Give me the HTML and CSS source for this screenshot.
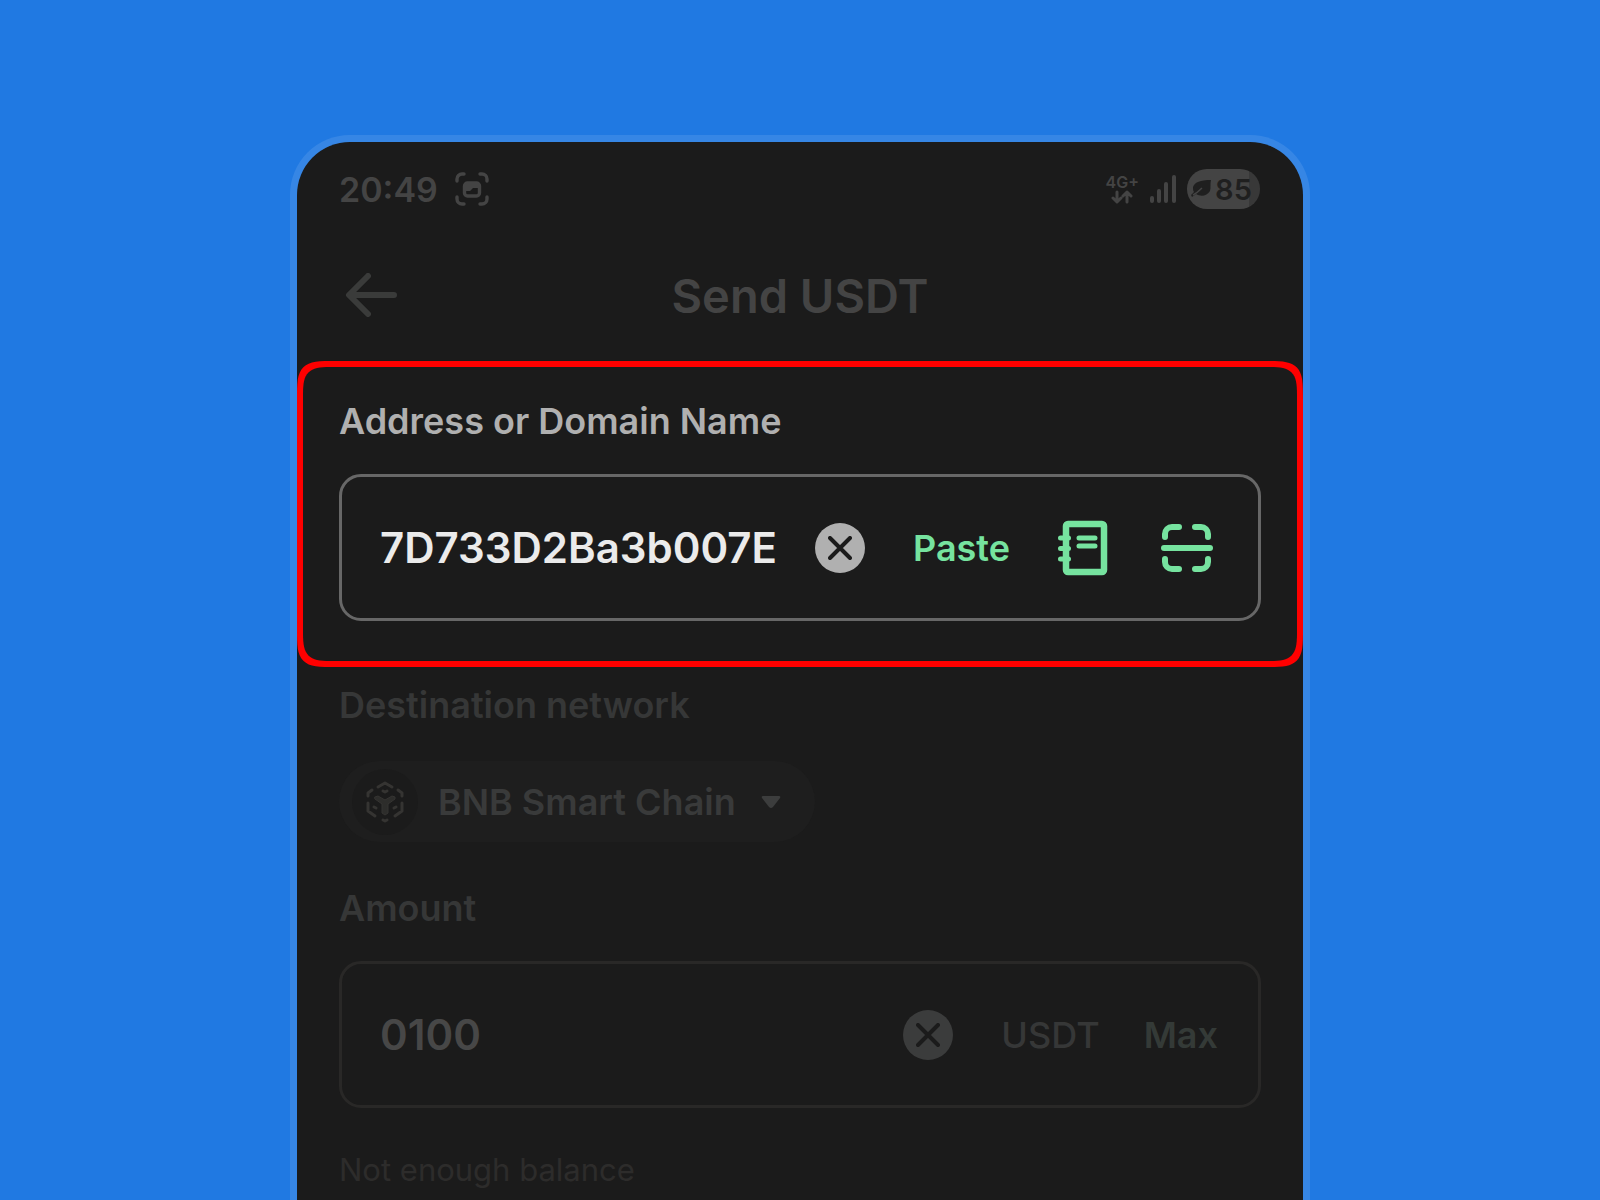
FILE: index.html
```html
<!DOCTYPE html>
<html lang="en">
<head>
  <meta charset="UTF-8">
  <meta name="viewport" content="width=device-width, initial-scale=1.0">
  <title>Send USDT</title>
  <link rel="stylesheet" href="styles.css">
</head>
<body>
<main class="phone">

  <!-- Phone status bar -->
  <div class="status-bar">
    <span class="time">20:49</span>
    <svg class="shot-icon" width="34" height="34" viewBox="0 0 34 34" fill="none" stroke="currentColor" stroke-width="3.4" stroke-linecap="round">
      <path d="M2 9V7a5 5 0 0 1 5-5h2M25 2h2a5 5 0 0 1 5 5v2M32 25v2a5 5 0 0 1-5 5h-2M9 32H7a5 5 0 0 1-5-5v-2"/>
      <rect x="9.500" y="11" width="15" height="13" rx="3"/>
      <path d="M11 12h12v4h-5l-3 3h-4z" fill="currentColor" stroke="none"/>
    </svg>
    <div class="status-right">
      <div class="network">
        <span>4G+</span>
        <svg width="24" height="14" viewBox="0 0 24 14" fill="none" stroke="currentColor" stroke-width="3" stroke-linecap="round" stroke-linejoin="round">
          <path d="M7 2v10M3 8l4 4 4-4M17 12V2M13 6l4-4 4 4"/>
        </svg>
      </div>
      <svg class="signal" width="26" height="28" viewBox="0 0 26 28" fill="currentColor">
        <rect x="0" y="21" width="4" height="7" rx="2"/>
        <rect x="7" y="14" width="4" height="14" rx="2"/>
        <rect x="14" y="7" width="4" height="21" rx="2"/>
        <rect x="22" y="0" width="4" height="28" rx="2"/>
      </svg>
      <div class="battery">
        <svg width="20" height="18" viewBox="0 0 20 18">
          <path d="M20 0C9 0 4 2 2 7c0 2 0 4 1 5L0 15l1 2 4-3c5 3 11 2 14-3 1-3 0-7 1-11z" fill="#1f1f1f"/>
          <path d="M2 15C6 13 9 10 11 8" fill="none" stroke="#444" stroke-width="1.500"/>
        </svg>
        <span>85</span>
      </div>
    </div>
  </div>

  <header class="header">
    <button class="back" type="button" aria-label="Back">
      <svg width="52" height="44" viewBox="0 0 52 44" fill="none" stroke="currentColor" stroke-width="6" stroke-linecap="round" stroke-linejoin="round">
        <path d="M23 3L4 22l19 19M5 22h44"/>
      </svg>
    </button>
    <h1>Send USDT</h1>
  </header>

  <!-- Highlighted step -->
  <section class="address-section">
    <label for="address">Address or Domain Name</label>
    <div class="field">
      <input id="address" class="address-input" type="text" value="7D733D2Ba3b007E" spellcheck="false">
      <button class="clear" type="button" aria-label="Clear address">
        <svg width="24" height="24" viewBox="0 0 24 24" fill="none" stroke="currentColor" stroke-width="4" stroke-linecap="round">
          <path d="M2 2l20 20M22 2L2 22"/>
        </svg>
      </button>
      <button class="paste" type="button">Paste</button>
      <button class="book" type="button" aria-label="Address book">
        <svg width="50" height="56" viewBox="0 0 50 56" fill="none" stroke="currentColor" stroke-linecap="round" stroke-linejoin="round">
          <rect x="8" y="4" width="38" height="48" rx="2" stroke-width="6.500"/>
          <path d="M2.500 18h8M2.500 28.500h8M2.500 39h8" stroke-width="5"/>
          <path d="M21 18h16M21 26h16" stroke-width="5"/>
        </svg>
      </button>
      <button class="scan" type="button" aria-label="Scan QR code">
        <svg width="54" height="50" viewBox="0 0 54 50" fill="none" stroke="currentColor" stroke-linecap="round">
          <path d="M5 14v-3a7 7 0 0 1 7-7h7M35 4h6a7 7 0 0 1 7 7v3M48 36v3a7 7 0 0 1-7 7h-6M19 46h-7a7 7 0 0 1-7-7v-3" stroke-width="6"/>
          <path d="M4 25h46" stroke-width="6"/>
        </svg>
      </button>
    </div>
  </section>

  <section class="details">
    <label for="network">Destination network</label>
    <div class="network-pill">
      <span class="chain-icon">
        <svg width="38" height="42" viewBox="0 0 38 42" fill="none" stroke="currentColor" stroke-width="3" stroke-linecap="round" stroke-linejoin="round">
          <path d="M12 6l7-4 7 4M2 15v-3l4-3M32 9l4 3v3M2 22v8l7 5M36 22v8l-7 5M17 39l2 1 2-1"/>
          <path d="M17 10l2 1 2-1M8 26l2 1M30 26l-2 1"/>
          <path d="M9 16l3-1 7 4 7-4 3 1v2l-7 5v9l-3 2-3-2v-9l-7-5z" fill="currentColor" fill-opacity="0.700" stroke-width="1"/>
        </svg>
      </span>
      <select id="network">
        <option>BNB Smart Chain</option>
      </select>
      <svg class="caret" width="20" height="14" viewBox="0 0 20 14" fill="currentColor">
        <path d="M2 1h16q2 0 1 2l-7 9q-2 2-4 0L1 3Q0 1 2 1z"/>
      </svg>
    </div>

    <label for="amount">Amount</label>
    <div class="field amount-field">
      <input id="amount" type="text" inputmode="decimal" value="0100">
      <button class="clear" type="button" aria-label="Clear amount">
        <svg width="24" height="24" viewBox="0 0 24 24" fill="none" stroke="currentColor" stroke-width="4" stroke-linecap="round">
          <path d="M2 2l20 20M22 2L2 22"/>
        </svg>
      </button>
      <span class="unit">USDT</span>
      <button class="max" type="button">Max</button>
    </div>
    <p class="helper">Not enough balance</p>
  </section>

</main>
</body>
</html>
```
FILE: styles.css
```css
* {
  box-sizing: border-box;
}

body {
  margin: 0;
  height: 100vh;
  overflow: hidden;
  padding-top: 135px;
  background-color: #2079e2;
  font-family: Inter, "Liberation Sans", sans-serif;
}

button, input, select {
  margin: 0;
  padding: 0;
  border: none;
  background: none;
  font-family: inherit;
}

button {
  cursor: pointer;
}

button svg {
  display: block;
}

.phone {
  max-width: 1020px;
  min-height: 100%;
  margin: 0 auto;
  border: 7px solid rgba(255, 255, 255, 0.1);
  border-bottom: none;
  border-radius: 60px 60px 0 0;
  background-color: #1b1b1b;
  background-clip: padding-box;
}

/* Status bar */
.status-bar {
  display: flex;
  align-items: center;
  height: 94px;
  padding: 0 43px 0 42px;
  color: #444;
}

.time {
  font-size: 34px;
  font-weight: 600;
}

.shot-icon {
  margin-left: 17px;
}

.status-right {
  display: flex;
  align-items: center;
  gap: 11px;
  margin-left: auto;
}

.network {
  display: flex;
  flex-direction: column;
  align-items: center;
  font-size: 16px;
  font-weight: 600;
  line-height: 16px;
}

.battery {
  display: flex;
  align-items: center;
  justify-content: center;
  gap: 4px;
  width: 73px;
  height: 40px;
  padding-right: 4px;
  border-radius: 20px;
  background: linear-gradient(to right, #444 85%, #383838 85%);
  color: #1f1f1f;
  font-size: 29px;
  font-weight: 600;
}

/* Title row, the title stays centred beside the back button */
.header {
  display: grid;
  grid-template-columns: 52px 1fr 52px;
  align-items: center;
  height: 118px;
  margin-bottom: 7px;
  padding: 0 48px;
}

.back {
  color: #3a3b3a;
}

h1 {
  margin: 0;
  color: #444;
  font-size: 47px;
  font-weight: 600;
  text-align: center;
}

label {
  display: block;
  font-size: 36px;
  font-weight: 600;
  line-height: 44px;
}

.address-section {
  padding: 32px 36px 40px;
  border: 6px solid #f00;
  border-radius: 32px;
  color: #b0b0b0;
}

@supports (corner-shape: squircle) {
  .address-section {
    border-radius: 40px;
    corner-shape: squircle;
  }
}

.field {
  display: flex;
  align-items: center;
  height: 147px;
  margin-top: 31px;
  padding: 0 44px 0 38px;
  border: 3px solid #676767;
  border-radius: 22px;
}

.field input {
  flex: 1;
  min-width: 0;
  color: #ebebeb;
  font-size: 42px;
  font-weight: 600;
}

.clear {
  display: flex;
  align-items: center;
  justify-content: center;
  flex: none;
  width: 50px;
  height: 50px;
  border-radius: 50%;
  background-color: #b0b0b0;
  color: #1b1b1b;
}

.paste, .unit, .max {
  margin-left: 48px;
  font-size: 36px;
  font-weight: 600;
}

.paste, .book, .scan {
  color: #76e39f;
}

.book {
  margin-left: 48px;
}

.scan {
  margin-left: 52px;
}

/* Dimmed part of the form */
.details {
  padding: 16px 42px 0;
  color: #363737;
}

.network-pill {
  display: flex;
  align-items: center;
  width: fit-content;
  height: 81px;
  margin: 34px 0 44px;
  padding: 0 34px 0 13px;
  border-radius: 41px;
  background-color: #1e1e1e;
}

.chain-icon {
  display: flex;
  align-items: center;
  justify-content: center;
  width: 66px;
  height: 66px;
  margin-right: 20px;
  border-radius: 50%;
  background-color: #1b1b1b;
  color: #353432;
}

.network-pill select {
  appearance: none;
  color: #393a3a;
  font-size: 36px;
  font-weight: 600;
}

.caret {
  margin-left: 25px;
  color: #3c3d3d;
}

.amount-field {
  padding-right: 40px;
  border-color: #292827;
}

.amount-field input {
  color: #474747;
}

.amount-field .clear {
  background-color: #3b3c3c;
}

.unit {
  font-weight: 500;
}

.max {
  margin-left: 44px;
  color: #343a37;
}

.helper {
  margin: 42px 0 0;
  color: #2d2c2b;
  font-size: 31px;
  line-height: 40px;
}
```
